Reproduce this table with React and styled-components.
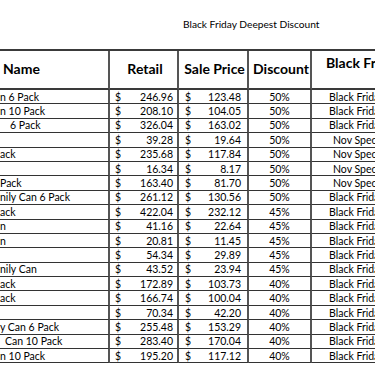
import React from 'react'
import styled, { createGlobalStyle } from 'styled-components'

const Global = createGlobalStyle`
  body {
    margin: 0;
    background: #fff;
  }
`

const Sheet = styled.div`
  width: 375px;
  height: 366px;
  overflow: hidden;
  background: #fff;
  font-family: Lato, "Open Sans", sans-serif;
  color: #000;
`

const Title = styled.div`
  box-sizing: border-box;
  height: 49px;
  padding: 17px 0 0 183px;
  font-size: 10.2px;
  line-height: 14px;
  white-space: nowrap;
`

const Grid = styled.div`
  display: grid;
  grid-template-columns: 110px 69px 70px 63px 150px;
  grid-template-rows: 39px repeat(19, 14.4px);
  width: 462px;
  border-top: 2px solid #3a3a3a;
  box-sizing: border-box;
`

const Head = styled.div`
  box-sizing: border-box;
  display: flex;
  align-items: ${p => (p.$top ? 'flex-start' : 'center')};
  justify-content: ${p => p.$align || 'center'};
  padding: ${p => (p.$top ? '3px 0 0 14px' : '0 0 2px 3px')};
  font-weight: 700;
  font-size: 14px;
  white-space: nowrap;
  border-bottom: 2px solid #3a3a3a;
  border-right: ${p => (p.$last ? 'none' : '2px solid #555')};
`

const Cell = styled.div`
  box-sizing: border-box;
  display: flex;
  align-items: center;
  font-size: 10.5px;
  white-space: nowrap;
  overflow: hidden;
  border-bottom: 1px solid #333;
  border-right: ${p => (p.$last ? 'none' : '2px solid #555')};
`

const NameCell = styled(Cell)`
  padding-left: ${p => p.$indent || 0}px;
`

const Money = styled(Cell)`
  justify-content: space-between;
  padding: 0 ${p => p.$right}px 0 ${p => p.$left}px;
`

const Pct = styled(Cell)`
  justify-content: center;
`

const Promo = styled(Cell)`
  padding-left: ${p => p.$indent}px;
`

const rows = [
  ['n 6 Pack', 0, '246.96', '123.48', '50%', 'Black Friday'],
  ['n 10 Pack', 0, '208.10', '104.05', '50%', 'Black Friday'],
  ['6 Pack', 10, '326.04', '163.02', '50%', 'Black Friday'],
  ['', 0, '39.28', '19.64', '50%', 'Nov Special'],
  ['ack', 0, '235.68', '117.84', '50%', 'Nov Special'],
  ['', 0, '16.34', '8.17', '50%', 'Nov Special'],
  ['Pack', 0, '163.40', '81.70', '50%', 'Nov Special'],
  ['nily Can 6 Pack', 0, '261.12', '130.56', '50%', 'Black Friday'],
  ['ack', 0, '422.04', '232.12', '45%', 'Black Friday'],
  ['n', 0, '41.16', '22.64', '45%', 'Black Friday'],
  ['n', 0, '20.81', '11.45', '45%', 'Black Friday'],
  ['', 0, '54.34', '29.89', '45%', 'Black Friday'],
  ['nily Can', 0, '43.52', '23.94', '45%', 'Black Friday'],
  ['ack', 0, '172.89', '103.73', '40%', 'Black Friday'],
  ['ack', 0, '166.74', '100.04', '40%', 'Black Friday'],
  ['', 0, '70.34', '42.20', '40%', 'Black Friday'],
  ['y Can 6 Pack', 0, '255.48', '153.29', '40%', 'Black Friday'],
  ['Can 10 Pack', 5, '283.40', '170.04', '40%', 'Black Friday'],
  ['n 10 Pack', 0, '195.20', '117.12', '40%', 'Black Friday'],
]

export default function App() {
  return (
    <Sheet>
      <Global />
      <Title>Black Friday Deepest Discount</Title>
      <Grid>
        <Head $align="flex-start">Name</Head>
        <Head>Retail</Head>
        <Head>Sale Price</Head>
        <Head>Discount</Head>
        <Head $top $last $align="flex-start">Black Friday Deal</Head>
        {rows.map(([name, indent, retail, sale, pct, promo], i) => (
          <React.Fragment key={i}>
            <NameCell $indent={indent}>{name}</NameCell>
            <Money $left={5} $right={4}><span>$</span><span>{retail}</span></Money>
            <Money $left={6} $right={6}><span>$</span><span>{sale}</span></Money>
            <Pct>{pct}</Pct>
            <Promo $last $indent={promo === 'Nov Special' ? 21 : 17}>{promo}</Promo>
          </React.Fragment>
        ))}
      </Grid>
    </Sheet>
  )
}
